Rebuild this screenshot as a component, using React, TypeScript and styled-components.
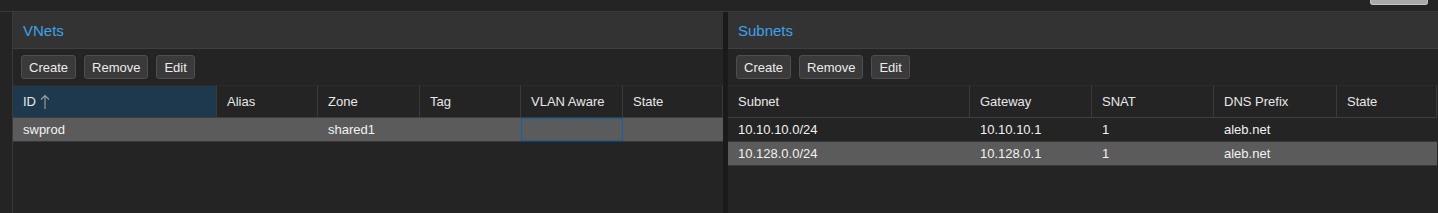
import styled, { createGlobalStyle } from "styled-components";

const GlobalStyle = createGlobalStyle`
    html, body {
        margin: 0;
        padding: 0;
        background: #242424;
    }
    body {
        font-family: "Liberation Sans", Arial, sans-serif;
        font-size: 13px;
        color: #f2f2f2;
    }
`;

const Page = styled.div`
    width: 1438px;
    height: 213px;
    display: flex;
    flex-direction: column;
    background: #242424;
    overflow: hidden;
`;

const TopStrip = styled.div`
    height: 11px;
    flex: none;
    display: flex;
    justify-content: flex-end;
    padding-right: 10px;
    border-bottom: 1px solid #3a3a3a;
`;

const TopButton = styled.div`
    width: 56px;
    height: 4px;
    background: #a9a9a9;
    border: 1px solid #c4c4c4;
    border-top: none;
    border-radius: 0 0 3px 3px;
`;

const Body = styled.div`
    flex: 1;
    display: flex;
    padding-left: 12px;
`;

const Panel = styled.div<{ $width: number }>`
    width: ${(p) => p.$width}px;
    flex: none;
    display: flex;
    flex-direction: column;
    border-left: ${(p) => (p.$width < 711 ? "1px solid #3a3a3a" : "none")};
`;

const Splitter = styled.div`
    width: 5px;
    flex: none;
    background: #1a1a1a;
`;

const TitleBar = styled.div`
    height: 36px;
    background: #333333;
    border-bottom: 1px solid #3f3f3f;
    display: flex;
    align-items: center;
    padding-left: 10px;
    font-size: 15px;
    color: #3fa2ea;
`;

const Toolbar = styled.div`
    height: 36px;
    display: flex;
    align-items: center;
    gap: 8px;
    padding-left: 8px;
`;

const Button = styled.button`
    height: 24px;
    padding: 0 7px;
    background: #3a3a3a;
    border: 1px solid #4e4e4e;
    border-radius: 3px;
    color: #ececec;
    font-family: "Liberation Sans", Arial, sans-serif;
    font-size: 13px;
`;

const Grid = styled.div<{ $cols: string }>`
    display: grid;
    grid-template-columns: ${(p) => p.$cols};
`;

const HeadCell = styled.div<{ $sorted?: boolean }>`
    height: 31px;
    display: flex;
    align-items: center;
    padding-left: 10px;
    background: ${(p) => (p.$sorted ? "#1e394d" : "#242424")};
    border-right: 1px solid #3a3a3a;
    border-top: 1px solid #2c2c2c;
    border-bottom: 1px solid #3f3f3f;
    color: #e8e8e8;
`;

const SortArrow = styled.svg`
    margin-left: 4px;
    flex: none;
`;

const Cell = styled.div<{ $selected?: boolean; $focus?: boolean }>`
    height: 23px;
    display: flex;
    align-items: center;
    padding-left: 10px;
    background: ${(p) => (p.$selected ? "#5b5b5b" : "#242424")};
    border-bottom: 1px solid #383838;
    box-shadow: ${(p) => (p.$focus ? "inset 0 0 0 1px #0f62a8" : "none")};
    color: #f2f2f2;
`;

const vnetCols = "204px 101px 102px 101px 102px 100px";
const subnetCols = "242px 122px 122px 123px 100px";

const vnetHeads = ["Alias", "Zone", "Tag", "VLAN Aware", "State"];
const subnetHeads = ["Subnet", "Gateway", "SNAT", "DNS Prefix", "State"];

const subnets = [
    ["10.10.10.0/24", "10.10.10.1", "1", "aleb.net", ""],
    ["10.128.0.0/24", "10.128.0.1", "1", "aleb.net", ""],
];

const Tools = () => (
    <Toolbar>
        <Button>Create</Button>
        <Button>Remove</Button>
        <Button>Edit</Button>
    </Toolbar>
);

export default function App() {
    return (
        <Page>
            <GlobalStyle />
            <TopStrip>
                <TopButton />
            </TopStrip>
            <Body>
                <Panel $width={710}>
                    <TitleBar>VNets</TitleBar>
                    <Tools />
                    <Grid $cols={vnetCols}>
                        <HeadCell $sorted>
                            ID
                            <SortArrow width="10" height="15" viewBox="0 0 10 15">
                                <path d="M5 1.5V15M1 5.5L5 1.5L9 5.5" fill="none" stroke="#a0a0a0" strokeWidth="1.1" />
                            </SortArrow>
                        </HeadCell>
                        {vnetHeads.map((h) => (
                            <HeadCell key={h}>{h}</HeadCell>
                        ))}
                        {["swprod", "", "shared1", "", "", ""].map((v, i) => (
                            <Cell key={i} $selected $focus={i === 4}>
                                {v}
                            </Cell>
                        ))}
                    </Grid>
                </Panel>
                <Splitter />
                <Panel $width={711}>
                    <TitleBar>Subnets</TitleBar>
                    <Tools />
                    <Grid $cols={subnetCols}>
                        {subnetHeads.map((h) => (
                            <HeadCell key={h}>{h}</HeadCell>
                        ))}
                        {subnets.map((row, r) =>
                            row.map((v, i) => (
                                <Cell key={`${r}-${i}`} $selected={r === 1}>
                                    {v}
                                </Cell>
                            ))
                        )}
                    </Grid>
                </Panel>
            </Body>
        </Page>
    );
}
